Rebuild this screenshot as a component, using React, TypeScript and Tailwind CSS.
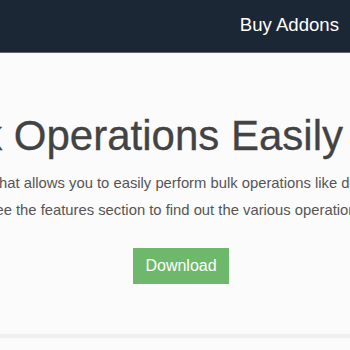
import React from "react";

export default function App() {
  return (
    <div
      className="w-[350px] h-[350px] overflow-hidden bg-[#fbfbfb]"
      style={{ fontFamily: '"Liberation Sans", Arial, sans-serif' }}
    >
      <header className="h-[53px] bg-[#1c2736] border-b border-[#5d6676] flex items-center justify-end pr-[11px]">
        <span className="text-[18.6px] text-white leading-none -mt-[2px]">Buy Addons</span>
      </header>
      <section className="h-[281px] bg-[#fbfbfb] pt-[58px] overflow-hidden">
        <div className="flex justify-end pr-[7px]">
          <h1 className="whitespace-nowrap text-[42px] leading-[50px] text-[#434343] font-normal [-webkit-text-stroke:0.3px_#434343]">
            Perform Bulk Operations Easily
          </h1>
        </div>
        <div className="mt-[9px] text-[14.8px] leading-[27px] text-[#555555] whitespace-nowrap">
          <p className="-ml-[5px]">
            that allows you to easily perform bulk operations like delete, move and copy
          </p>
          <p className="-ml-[12px]">
            see the features section to find out the various operations that are supported
          </p>
        </div>
        <div className="mt-[24px] flex">
          <button className="ml-[133px] w-[96px] h-[36px] bg-[#6eb86c] text-white text-[16px]">
            Download
          </button>
        </div>
      </section>
      <div className="h-[4px] bg-[#efefef]" />
      <div className="h-[12px] bg-[#fbfbfb]" />
    </div>
  );
}
